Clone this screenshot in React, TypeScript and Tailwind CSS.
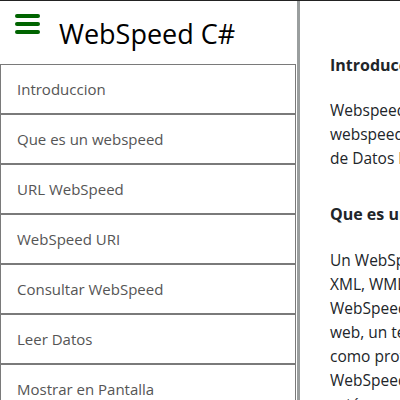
const FONT = "font-['Segoe_UI','Open_Sans','Noto_Sans',sans-serif]";

const menu = [
  "Introduccion",
  "Que es un webspeed",
  "URL WebSpeed",
  "WebSpeed URI",
  "Consultar WebSpeed",
  "Leer Datos",
  "Mostrar en Pantalla",
];

const intro = [
  "Webspeed es una libreria para consultar un",
  "webspeed desde C# y obtener la informacion",
  "de Datos Progress.",
];

const queEs = [
  "Un WebSpeed es un servicio que devuelve",
  "XML, WML o HTML desde la base de datos",
  "WebSpeed de Progress a traves de un servidor",
  "web, un terminal o una aplicacion que actua",
  "como protocolo de comunicacion con el",
  "WebSpeed Transaction Server, que a su vez",
  "está conectado a la base de datos.",
];

function Hamburger() {
  return (
    <svg width="26" height="20" viewBox="0 0 26 20" className="shrink-0 mt-[13px]">
      <rect x="0" y="0" width="25" height="4" rx="2" fill="#006400" />
      <rect x="0" y="8" width="25" height="4" rx="2" fill="#006400" />
      <rect x="0" y="16" width="25" height="4" rx="2" fill="#006400" />
    </svg>
  );
}

export default function App() {
  return (
    <div className={`${FONT} h-[400px] w-[400px] overflow-hidden border-t border-[#222] bg-white flex`}>
      <aside className="w-[300px] shrink-0 border-r-[3px] border-[#9a9e9e] flex flex-col overflow-hidden">
        <header className="h-[63px] shrink-0 flex items-start gap-[18px] pl-[15px]">
          <Hamburger />
          <h1 className="mt-[19px] text-[27px] leading-none text-black">WebSpeed C#</h1>
        </header>
        <nav className="flex flex-col pr-[1px]">
          {menu.map(item => (
            <a
              key={item}
              href="#"
              className="h-[50px] shrink-0 flex items-center border border-[#7a7a7a] pl-[16px] text-[15px] text-[#555]"
            >
              {item}
            </a>
          ))}
        </nav>
      </aside>

      <main className="flex-1 pl-[30px] pt-[53px] text-[#212529] whitespace-nowrap">
        <h2 className="text-[16px] font-bold leading-[22px]">Introduccion</h2>
        <p className="mt-[22px] text-[15.5px] leading-[24px]">
          {intro.map(line => (
            <span key={line} className="block">{line}</span>
          ))}
        </p>
        <h2 className="mt-[33px] text-[16px] font-bold leading-[22px]">Que es un webspeed</h2>
        <p className="mt-[23px] text-[15.5px] leading-[24px]">
          {queEs.map(line => (
            <span key={line} className="block">{line}</span>
          ))}
        </p>
      </main>
    </div>
  );
}
